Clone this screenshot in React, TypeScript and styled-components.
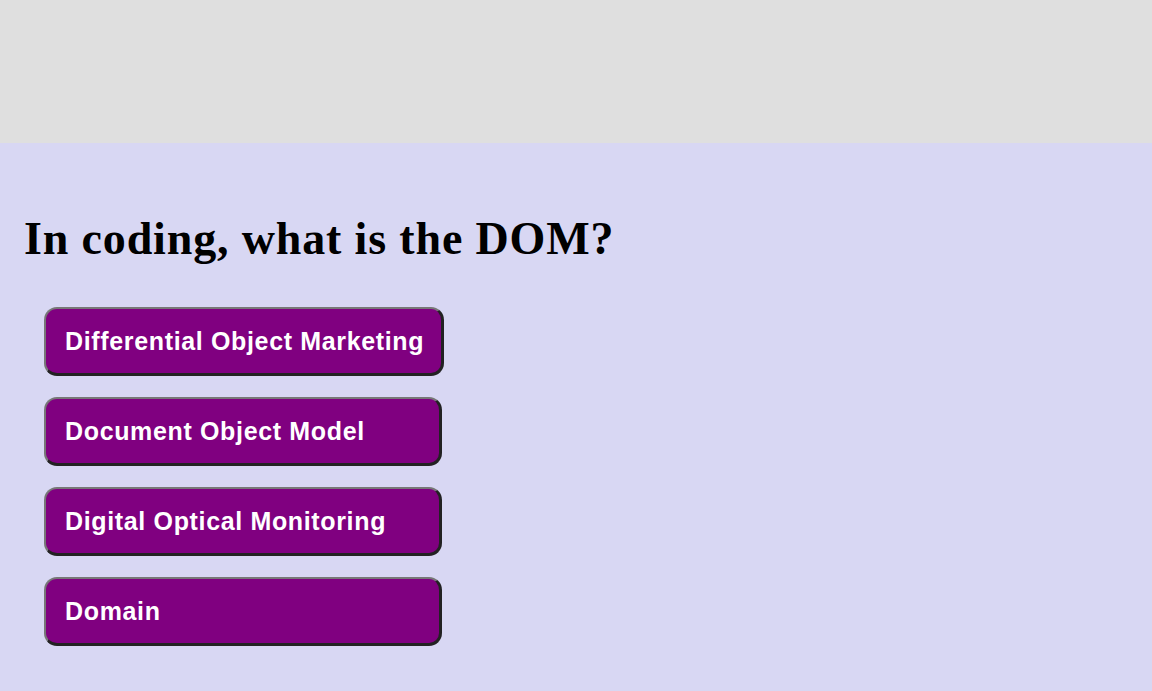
import React from "react";
import styled, { createGlobalStyle } from "styled-components";

const Global = createGlobalStyle`
  html, body { margin: 0; padding: 0; }
  body { background: #d8d7f3; font-family: "Liberation Serif", serif; }
`;

const Page = styled.div`
  display: flex;
  flex-direction: column;
  min-height: 691px;
`;

const TopBar = styled.header`
  height: 143px;
  background: #dfdfdf;
`;

const Main = styled.main`
  display: flex;
  flex-direction: column;
  padding: 72px 24px 0 24px;
`;

const Question = styled.h1`
  margin: 0;
  font-family: "Liberation Serif", serif;
  font-weight: 700;
  font-size: 46px;
  line-height: 48px;
  letter-spacing: 0.85px;
  color: #000;
`;

const Answers = styled.div`
  display: flex;
  flex-direction: column;
  align-items: flex-start;
  gap: 21px;
  margin-top: 44px;
  padding-left: 20px;
`;

const AnswerButton = styled.button`
  box-sizing: border-box;
  min-width: 398px;
  height: 69px;
  padding: 0 17px 0 19px;
  text-align: left;
  background: #800080;
  color: #fff;
  font-family: "Liberation Sans", Arial, sans-serif;
  font-weight: 700;
  font-size: 25px;
  letter-spacing: 0.65px;
  white-space: nowrap;
  border-radius: 13px;
  border-style: solid;
  border-width: 2px 3px 3px 2px;
  border-color: #777 #222 #222 #777;
  cursor: pointer;
`;

const answers = [
  "Differential Object Marketing",
  "Document Object Model",
  "Digital Optical Monitoring",
  "Domain",
];

export default function App() {
  return (
    <Page>
      <Global />
      <TopBar />
      <Main>
        <Question>In coding, what is the DOM?</Question>
        <Answers>
          {answers.map((a) => (
            <AnswerButton key={a}>{a}</AnswerButton>
          ))}
        </Answers>
      </Main>
    </Page>
  );
}
